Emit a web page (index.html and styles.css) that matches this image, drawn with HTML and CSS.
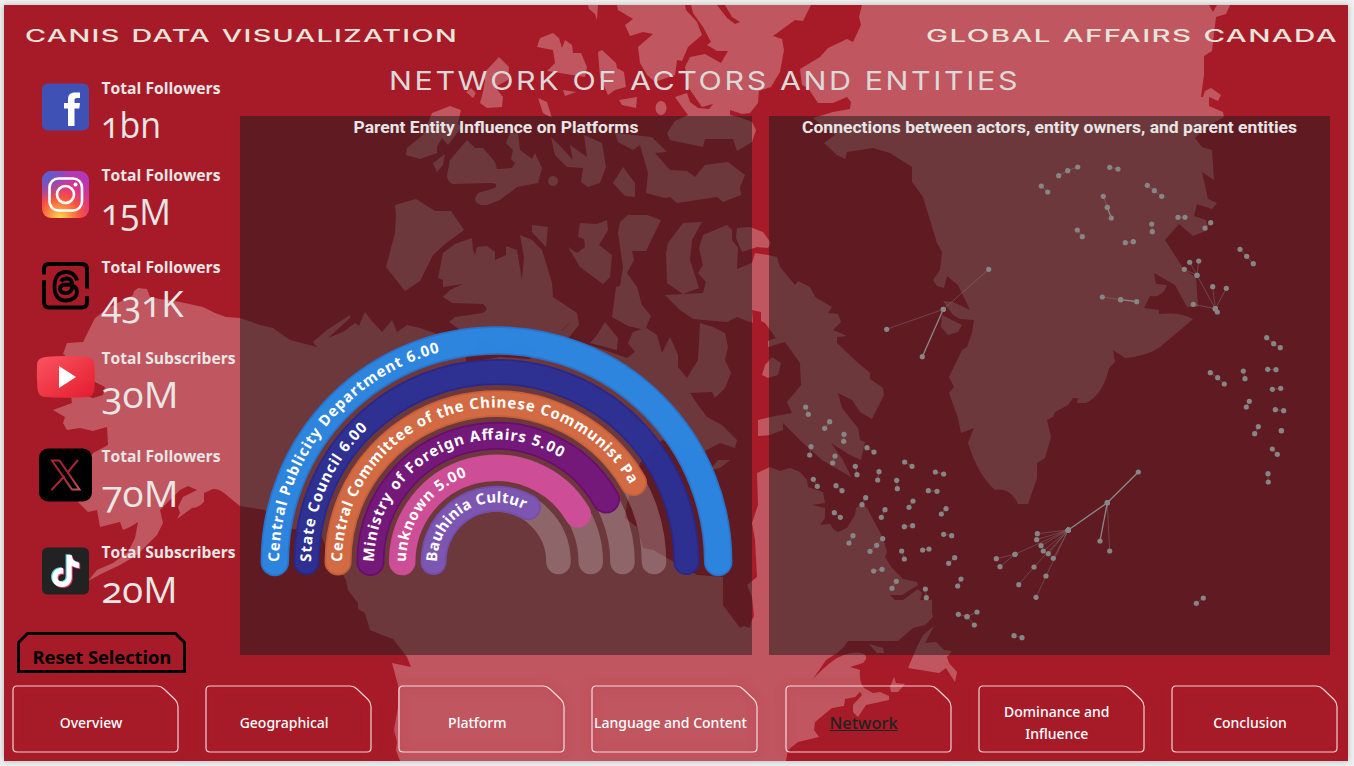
FILE: index.html
```html
<!DOCTYPE html>
<html lang="en">
<head>
<meta charset="utf-8">
<title>Network of Actors and Entities</title>
<link rel="stylesheet" href="styles.css">
</head>
<body>
<div class="report">
  <svg class="map" viewBox="4 5 1344 756" aria-hidden="true">
    <g class="land">
      <!-- mainland -->
      <path d="M133 295L134 291 138 288 147 289 150 297 160 299 180 302 203 307 215 313 226 317 240 318 260 325 273 328 290 340 317 347 313 342 327 330 350 315 350 318 328 338 343 332 355 323 359 326 365 312 371 320 382 332 392 320 397 332 407 325 420 328 440 335 463 330 560 330 562 331 572 320 579 323 575 315 579 325 565 342 590 345 610 352 627 358 635 352 628 343 633 332 645 328 642 325 657 335 662 353 670 337 678 355 678 367 687 378 698 360 700 323 713 327 725 333 728 347 725 360 731 373 725 388 715 398 712 392 690 393 698 405 707 417 722 425 737 440 735 448 720 443 703 452 662 440 640 463 627 503 625 518 637 527 643 548 653 550 667 558 697 575 723 577 723 605 740 628 744 626 750 628 751 622 754 616 752 597 747 585 757 577 755 540 752 523 758 505 757 473 770 467 780 471 790 468 800 472 807 480 808 487 823 492 825 503 812 505 825 508 825 518 820 525 830 524 834 530 838 532 847 528 855 515 856 508 862 503 867 508 883 538 887 552 885 557 892 568 903 579 917 582 918 585 902 595 890 595 895 600 903 600 918 589 922 593 920 600 932 600 932 612 933 617 925 625 913 628 898 641 848 641 843 648 837 653 826 660 813 679Q826 665 837 658 852 651 862 653 870 657 863 663L850 667 860 670Q859 683 864 688L873 693 880 692 889 696 889 700 866 705 858 717 853 712 853 705 862 695 860 692 855 697 845 699 844 706 832 708 815 722 814 730 819 737 798 742 788 750 786 761H400L396 750 397 742 394 730 398 707 398 685 392 663 411 667 407 657 393 639 382 635 370 630 365 613 358 609 358 603 348 590 346 580 342 573 337 565 325 545 320 532 293 529 265 510 240 506 230 498Q220 488 213 489L204 493 204 502Q198 508 192 508L177 519 180 513 178 507 183 497 197 490 188 486 180 490 160 510 163 523 157 535 137 555 120 565 103 573 88 581 97 570 113 563 128 552 135 538 138 522 130 527 123 530 120 522 100 527 97 510 88 512 78 502 80 470 93 453 108 445 107 427 93 431 80 428 67 430 63 423 65 417 53 410 72 403 70 390 93 398 103 395 105 387 95 382 65 370 65 355 63 354 67 343 83 342 95 318 110 307Z"/>
      <!-- Victoria and Banks islands -->
      <path d="M472 238L473 250 475 255 477 247 487 246 495 252V260L506 255V246L517 250 522 280 524 257 520 235 532 240 542 250 552 283 553 297 577 313 579 325 570 322 560 332H463L449 322 455 317 483 313Q490 309 483 304L452 303 443 297 450 290 463 284 443 287V280L438 278 443 253 455 244Z"/>
      <path d="M395 205L416 199 435 211H451L464 230 445 244 433 255 420 281 405 291 386 267 395 233 396 215Z"/>
      <!-- Arctic islands -->
      <path d="M588 5L589 9 595 14 597 20 598 5ZM617 5L618 10 633 19 625 25 630 36 643 32 653 34 638 47 640 63 647 75 655 82 675 75 677 60 682 61 688 47 702 35 697 22 686 10 685 5ZM691 5L693 13 703 27 711 42 707 45 717 51H728L721 63 705 54 690 57 685 67 688 87 702 107 713 104 709 109 698 108 690 102 687 93 675 97 682 107 688 115 675 121 667 133 670 140 703 147 705 139H733L737 151 752 142 756 130 752 122 742 118 730 115V110L742 114 750 113 758 103 759 91 771 87 780 72 784 50 782 39 773 36 795 20 803 21 811 5H725L732 17 740 22 735 24 727 18 717 5Z"/>
      <path d="M537 47L540 38 553 33 559 38 562 48 565 40 572 45 573 53H581L587 67 585 77 547 71 555 63 553 50ZM563 90L576 92 565 96ZM598 52L602 50 616 63 617 68 624 72 626 87 615 90 608 95 600 77ZM499 57L509 67 508 80 495 87 503 97 502 107 487 108 480 103 483 92 485 80 482 75ZM466 92L471 88 476 93 473 98ZM538 98L547 102 552 118 543 113ZM619 100L637 97 636 108 622 105ZM432 113L450 106 461 110 458 123 461 128 448 145 442 138 437 147V153L420 159 406 155 407 148 423 135ZM445 154L443 165 437 172 433 163Z"/>
      <ellipse cx="661" cy="108" rx="5.5" ry="7"/><circle cx="553" cy="181" r="5"/>
      <path d="M467 140L475 148H483L495 162 497 169 512 168 515 163 511 159 513 150 506 143 510 133H518L520 150 532 159 535 153 542 168 538 183 517 187 500 200 487 205Q475 206 475 198L478 193 495 188Q499 183 490 183L453 184Q447 182 447 175L450 160ZM551 137L562 148 573 160 570 145 587 157 584 135 602 143 606 167 600 183 588 187 581 182 583 168 567 167 555 155ZM623 167L635 183V197L625 196 613 183ZM615 133L652 137 667 152 655 153 670 170 687 171 695 177 705 165 728 162 745 175 740 187 741 195 723 202 717 197 677 203 670 197 665 198 646 193 648 173 640 145 633 150 618 142Z"/>
      <path d="M532 225L548 227 546 247 532 232ZM580 223L597 224 607 220 608 230 599 245 612 255 610 277 603 284 580 267 568 247 577 253 585 247 584 239 578 237ZM628 215H647L661 220 646 251H632L634 260 627 273 637 287 642 305 651 316 645 330 628 326 612 317 616 287 620 286 623 267 618 233 620 222ZM683 223L702 222 692 240 690 260 699 288 683 294 667 283 666 253 668 243ZM605 322L618 338 617 350 590 343 597 335ZM737 228L750 227 763 232 771 243 768 248 757 247 742 252 736 238ZM772 357L781 363 778 375 768 378 762 375 765 365ZM730 460L720 468 710 470 718 460Z"/>
      <!-- Baffin Island -->
      <path d="M727 225L732 230V240L738 248 737 269 752 263 755 253 768 255 777 257 780 267 795 285 798 281 810 287 815 297 832 307 828 313 838 314 841 322 833 330 847 336 837 337V343L857 362 870 373V379L883 388 884 395 872 419 860 412 852 400 838 393 842 408 858 428 860 440 865 442 861 460 850 455 831 443 843 460 851 477 822 460 803 443 783 423V430L770 435 758 436V420L770 417 792 413 787 402 801 385 800 363 785 342 768 347V341L776 338 765 323 761 321V312L752 310 753 323 747 318 752 323 737 317 727 322 693 319 680 310 665 295 703 293 706 282 698 273 703 265 699 248 703 235Z"/>
      <!-- Greenland -->
      <path d="M862 5L859 17 861 25 853 42 847 39 828 48 820 57 800 69 802 85 808 88 818 103H833L847 97 851 102 850 109 833 112 813 118 835 135 824 143 837 155 845 159 847 152 873 148 890 153 912 167V182L923 197 937 243 942 252 940 270 933 280 937 286 944 288 947 276 958 285 970 310 953 302 943 301 953 315 960 319 974 320 972 333 967 347 962 350 949 377 954 387 949 393 958 418 961 433 974 428 968 443Q978 475 995 490 1010 487 1018 504H1028L1037 478V463L1045 458 1051 437 1047 420 1053 417 1055 412 1068 405 1073 398H1078L1077 403H1086Q1103 395 1109 368L1115 362 1113 350 1125 358Q1148 356 1160 347L1193 319Q1180 312 1159 314V310L1144 308 1150 296Q1163 298 1167 285L1156 284 1154 273 1175 285 1187 307H1198L1196 278 1183 268 1165 240 1179 224 1193 236 1208 230 1206 220 1194 216 1197 204 1212 209 1217 203 1208 199 1202 172 1214 180 1212 150 1202 147 1195 138 1205 128 1224 117 1223 112 1209 106V97L1218 101 1221 95 1211 88 1205 91 1203 97H1201L1204 75V56L1212 51 1216 17 1226 14 1230 5H1217L1213 12 1209 5ZM942 315L962 325 958 332 948 335 941 327Z"/>
      <!-- Newfoundland and the Maritimes -->
      <path d="M934 626L925 643 936 642 944 650 952 651 947 657 949 663 957 672 955 682 946 668 939 673 908 668 917 647 923 635ZM869 644L883 648 884 653 877 653ZM894 677L896 683 905 684 898 692 891 692 890 687Z"/>
    </g>
    <path class="sea" d="M474 334L478 345 466 356 466 363 500 357 530 359 540 348 520 343 500 348Z"/>
  </svg>

  <header class="top">
    <svg class="brand" width="436" height="22"><text x="0" y="17" textLength="433" lengthAdjust="spacingAndGlyphs">CANIS DATA VISUALIZATION</text></svg>
    <svg class="brand" width="413" height="22"><text x="1" y="17" textLength="412" lengthAdjust="spacingAndGlyphs">GLOBAL AFFAIRS CANADA</text></svg>
  </header>

  <div class="content">
    <aside class="side">
      <section class="stat">
        <svg class="icon" viewBox="0 0 60 60"><rect x="7" y="6.500" width="47" height="47" rx="6" fill="#3f51b5"/><path d="M33 49V31.500h-4V26h4v-3.500c0-5 2.500-7 7-7h5v5.500H42c-1.800 0-2.500.8-2.500 2.300V26H45l-.7 5.500h-4.800V49z" fill="#fff"/></svg>
        <svg class="figures" width="140" height="60"><text class="label" x="1.500" y="17" textLength="119" lengthAdjust="spacingAndGlyphs">Total Followers</text><text class="value" x="1" y="61" textLength="60" lengthAdjust="spacingAndGlyphs">1bn</text></svg>
      </section>
      <section class="stat">
        <svg class="icon" viewBox="0 0 60 60"><defs><radialGradient id="ig" cx=".38" cy="1" r="1"><stop offset="0" stop-color="#ffd94e"/><stop offset=".25" stop-color="#fb8a44"/><stop offset=".45" stop-color="#f9503f"/><stop offset=".7" stop-color="#d9368a"/><stop offset="1" stop-color="#b037b8"/></radialGradient><radialGradient id="ib" cx="0" cy="0" r=".65"><stop offset="0" stop-color="#4168d8"/><stop offset="1" stop-color="#4168d8" stop-opacity="0"/></radialGradient></defs><rect x="7" y="7" width="47" height="47" rx="9" fill="url(#ig)"/><rect x="7" y="7" width="47" height="47" rx="9" fill="url(#ib)"/><g fill="none" stroke="#fff" stroke-width="2.600"><rect x="14.500" y="14.500" width="32.500" height="32" rx="9"/><circle cx="30.500" cy="30.500" r="8.500"/></g><circle cx="40.500" cy="20.500" r="2" fill="#fff"/></svg>
        <svg class="figures" width="140" height="60"><text class="label" x="1.500" y="17" textLength="119" lengthAdjust="spacingAndGlyphs">Total Followers</text><text class="value" x="1" y="61" textLength="70" lengthAdjust="spacingAndGlyphs">15M</text></svg>
      </section>
      <section class="stat">
        <svg class="icon" viewBox="0 0 60 60" fill="none" stroke="#000" stroke-linecap="butt"><path d="M9 18.500V13q0-5 5-5H46.500q5.500 0 5.500 5V32.500M52 40V46q0 5.500-5.500 5.500H14q-5 0-5-5.500V24" stroke-width="4"/><path d="M42 24.500C40 17.500 35 16 31 16c-7.500 0-11.500 5.500-11.500 14.500S23.500 44.500 31 44.500c6 0 11-3.500 11-8.500 0-5.500-5-7.500-10.500-7.500-4 0-6.500 1.700-6.500 4.500 0 5.500 11 6 12-1C38 25 35.500 22.500 31.500 22.500c-2.500 0-4.200 1-5.500 3" stroke-width="3.800"/></svg>
        <svg class="figures" width="140" height="60"><text class="label" x="1.500" y="16.500" textLength="119" lengthAdjust="spacingAndGlyphs">Total Followers</text><text class="value" x="1.500" y="60.500" textLength="82" lengthAdjust="spacingAndGlyphs">431K</text></svg>
      </section>
      <section class="stat">
        <svg class="icon" viewBox="0 0 60 60"><defs><linearGradient id="yt" x1="0" y1="0" x2="1" y2="1"><stop offset="0" stop-color="#fb5460"/><stop offset="1" stop-color="#e31c2e"/></linearGradient></defs><path d="M2 18q0-7 8-8Q31 8 52 10q7 1 7.500 8 .8 12 0 24-.5 7-7.500 8Q31 51.500 10 50q-7-1-7.500-8Q1.500 30 2 18z" fill="url(#yt)"/><path d="M24 19v22l17-11z" fill="#fff"/></svg>
        <svg class="figures" width="140" height="60"><text class="label" x="1.500" y="17" textLength="134" lengthAdjust="spacingAndGlyphs">Total Subscribers</text><text class="value" x="1.500" y="61" textLength="77" lengthAdjust="spacingAndGlyphs">30M</text></svg>
      </section>
      <section class="stat">
        <svg class="icon" viewBox="0 0 60 60"><defs><linearGradient id="xg" x1="0" x2="1" y2="1"><stop offset=".5" stop-color="#a82530"/><stop offset="1" stop-color="#c0565f"/></linearGradient></defs><rect x="4" y="3.500" width="53" height="53" rx="9"/><path d="M17 15.500h7.500L44.500 44.500H37zM43 15L32.500 27.500M29.500 31L16.500 45" fill="none" stroke="url(#xg)" stroke-width="2"/></svg>
        <svg class="figures" width="140" height="60"><text class="label" x="1.500" y="16.500" textLength="119" lengthAdjust="spacingAndGlyphs">Total Followers</text><text class="value" x="1.500" y="61.500" textLength="77" lengthAdjust="spacingAndGlyphs">70M</text></svg>
      </section>
      <section class="stat">
        <svg class="icon" viewBox="0 0 60 60"><defs><path id="note" d="M31.500 14h5c.3 4.500 3 7 7.500 7.500V27c-3 0-5.500-1-7.500-2.200V36c0 6-4 10-9.700 10-5.800 0-9.800-4-9.800-9.500 0-6 5-10.200 11-9.300v5.500c-3-.8-5.700 1-5.700 3.800 0 2.500 2 4.200 4.400 4.200 3 0 4.800-1.800 4.800-5z"/></defs><rect x="7" y="6.500" width="47" height="47" rx="5.500" fill="#222"/><use href="#note" x="-.9" y="-.8" fill="#62cdea"/><use href="#note" x="1.200" y=".9" fill="#ee3d70"/><use href="#note" x=".2" fill="#fff"/></svg>
        <svg class="figures" width="140" height="60"><text class="label" x="1.500" y="16.500" textLength="134" lengthAdjust="spacingAndGlyphs">Total Subscribers</text><text class="value" x="1.500" y="61.500" textLength="76" lengthAdjust="spacingAndGlyphs">20M</text></svg>
      </section>
      <button class="reset"><svg width="169" height="41"><path d="M10.500 1.500H158.500L167.500 10.500V39.500H1.500V10.500z" fill="none" stroke="#000" stroke-width="3"/><text x="15.500" y="31.500" textLength="139">Reset Selection</text></svg></button>
    </aside>

    <main class="main">
      <svg class="headline" width="640" height="64"><text x="-1" y="38" textLength="631" lengthAdjust="spacingAndGlyphs">NETWORK OF ACTORS AND ENTITIES</text></svg>
      <div class="panels">
        <section class="panel">
          <svg viewBox="239.500 116 512.500 539">
            <text class="panel-title" x="353" y="133" textLength="285" lengthAdjust="spacingAndGlyphs">Parent Entity Influence on Platforms</text>
            <g class="track">
              <path d="M337.500 562a158 158 0 0 1 316 0"/><path d="M370 562a126 126 0 0 1 252 0"/><path d="M401.700 562a94.300 94.300 0 0 1 188.600 0"/><path d="M433 562a62.500 62.500 0 0 1 125 0"/>
            </g>
            <g class="bars">
              <path stroke="#2776d0" stroke-width="28.500" d="M274.300 562a221.700 221.700 0 0 1 443.400 0"/><path stroke="#2d87e2" stroke-width="25" d="M274.300 562a221.700 221.700 0 0 1 443.400 0"/>
              <path stroke="#28288c" stroke-width="26" d="M306 562a190 190 0 0 1 380 0"/><path stroke="#2d3094" stroke-width="22.500" d="M306 562a190 190 0 0 1 380 0"/>
              <path stroke="#c8613a" stroke-width="27" d="M337.500 562A158.500 158.500 0 0 1 633 482.500"/><path stroke="#d46c43" stroke-width="23.500" d="M337.500 562A158.500 158.500 0 0 1 633 482.500"/>
              <path stroke="#6a0c70" stroke-width="28" d="M370 562A126 126 0 0 1 605.500 499.500"/><path stroke="#74187a" stroke-width="24.500" d="M370 562A126 126 0 0 1 605.500 499.500"/>
              <path stroke="#cf4d98" stroke-width="26.500" d="M401.700 562A94.300 94.300 0 0 1 577.300 514.300"/>
              <path stroke="#754dae" stroke-width="26" d="M433 562A63 63 0 0 1 527.500 507.300"/><path stroke="#7c56b2" stroke-width="22.500" d="M433 562A63 63 0 0 1 527.500 507.300"/>
            </g>
            <defs>
              <path id="t1" d="M278.500 562a217.500 217.500 0 0 1 435 0"/><path id="t2" d="M310.500 562a185.500 185.500 0 0 1 371 0"/><path id="t3" d="M341.500 562a154.500 154.500 0 0 1 309 0"/><path id="t4" d="M373.500 562a122.500 122.500 0 0 1 245 0"/><path id="t5" d="M405.500 562a90.500 90.500 0 0 1 181 0"/><path id="t6" d="M436.500 562a59.500 59.500 0 0 1 119 0"/>
            </defs>
            <g class="bar-label">
              <text textLength="284"><textPath href="#t1">Central Publicity Department 6.00</textPath></text>
              <text textLength="149"><textPath href="#t2">State Council 6.00</textPath></text>
              <text textLength="404"><textPath href="#t3">Central Committee of the Chinese Communist Pa</textPath></text>
              <text textLength="260"><textPath href="#t4">Ministry of Foreign Affairs 5.00</textPath></text>
              <text textLength="112"><textPath href="#t5">unknown 5.00</textPath></text>
              <text textLength="122"><textPath href="#t6">Bauhinia Cultur</textPath></text>
            </g>
          </svg>
        </section>
        <section class="panel">
          <svg viewBox="769 116 561 539">
            <defs>
              <marker id="dot" markerUnits="userSpaceOnUse" markerWidth="6" markerHeight="6" refX="3" refY="3"><circle class="node" cx="3" cy="3" r="2.600"/></marker>
              <marker id="dot3" markerUnits="userSpaceOnUse" markerWidth="18" markerHeight="18" refX="9" refY="9"><circle class="node" cx="9" cy="9" r="7.800"/></marker>
            </defs>
            <text class="panel-title" x="802" y="133" textLength="495" lengthAdjust="spacingAndGlyphs">Connections between actors, entity owners, and parent entities</text>
            <g class="links strong">
              <path stroke-width="1.600" d="M1138.300 472L1107.300 502.700 1068.300 530"/><path d="M1107.300 502.700L1100 541"/><path d="M943.300 309.300L922.300 356.700"/><path d="M1107.300 207.300L1111.300 218"/><path d="M1120.700 299.700L1136.700 301.700"/>
            </g>
            <g class="links">
              <path d="M1107.300 502.700L1109.700 551"/>
              <path d="M988.700 269.300L943.300 309.300 886.700 329.300"/>
              <path d="M1041.300 186L1047.700 192"/><path d="M1058.700 175.700L1067.700 170.700 1077.700 167"/><path d="M1109.700 167.300L1118 169"/><path d="M1147.300 185.300L1154.300 190.700 1161.700 196.300"/><path d="M1103.300 196.300L1107.300 207.300"/><path d="M1077.300 230L1082.300 236.700"/><path d="M1125.300 242.700L1133.300 241.700"/><path d="M1151.700 224L1152.300 231.700"/><path d="M1178 217.300H1185"/><path d="M1205 228L1210.700 222.700"/><path d="M1240 249.300L1246.700 256.300 1253.300 263.700"/>
              <path d="M1189.700 262.300L1197 275.300 1198.700 261"/><path d="M1184.300 269.300L1197 275.300 1215.300 308.700 1212.700 286.700"/><path d="M1226.300 288.300L1215.300 308.700 1193.300 304.300"/><path d="M1215.300 308.700L1217.300 312"/><path d="M1102.300 297L1120.700 299.700"/>
              <path d="M1266.700 337.700L1273.700 343.700 1280.300 347.700"/><path d="M1210.300 372.700L1217.700 377.700 1224.300 384"/><path d="M1243.300 371L1245 378.700"/><path d="M1267.700 369.300L1276 369.700"/><path d="M1272.300 389.300L1280.700 388.300"/><path d="M1249.300 401.300L1246.300 407"/><path d="M1275.300 409.700L1283.700 410.700"/><path d="M1281.300 430.700h.1"/><path d="M1258.300 426.700L1254.700 433.700"/><path d="M1272.300 449L1277.300 454.300"/><path d="M1268 473.700L1268.300 482"/><path d="M1196.300 603.300L1203.300 598"/>
              <path d="M1068.300 530L1037.300 533.700"/><path d="M1068.300 530L1036.700 539.700"/><path d="M1068.300 530L1041 545.700"/><path d="M1068.300 530L1043.300 551"/><path d="M1068.300 530L1048.300 553.700"/><path d="M1068.300 530L1053.300 558.300"/><path d="M1068.300 530L1034 567 1018.700 584.700"/><path d="M1068.300 530L1046 576 1036 597.300"/><path d="M1068.300 530L1015 554.300 996.300 558.700"/><path d="M1015 554.300L1000 566.700"/>
            </g>
            <g class="links cluster" transform="translate(770 380) scale(.33333)">
              <path d="M107 81L115 103"/><path d="M179 125L164 145"/><path d="M222 163L221 184"/><path d="M123 200L119 225"/><path d="M195 228L188 249"/><path d="M291 203L312 216"/><path d="M256 259L261 284"/><path d="M327 275L323 300"/><path d="M130 298L142 319"/><path d="M198 317L216 332"/><path d="M404 246L426 259"/><path d="M380 301L382 326"/><path d="M496 276L521 282"/><path d="M475 332L501 334"/><path d="M287 353L276 374"/><path d="M193 398L211 412"/><path d="M345 389L334 412"/><path d="M429 363L417 382"/><path d="M528 386L514 402"/><path d="M403 440L428 437"/><path d="M249 467L237 489"/><path d="M338 476L320 496 300 514"/><path d="M521 463L545 467"/><path d="M395 513L403 537"/><path d="M458 510L477 507"/><path d="M554 533L536 550"/><path d="M311 573L336 568"/><path d="M379 604L366 625"/><path d="M573 597L563 618"/><path d="M466 627L469 653"/><path d="M565 703L591 710 621 696"/><path d="M591 710L613 735"/><path d="M732 767L756 773"/>
            </g>
          </svg>
        </section>
      </div>
    </main>
  </div>

  <svg class="defs"><symbol id="tab" viewBox="0 0 167 69"><path d="M5 1H145Q149 1 152 4L163 14.500Q166 17.500 166 21.500V63Q166 67 162 67H5Q1 67 1 63V5Q1 1 5 1Z"/></symbol></svg>
  <nav class="tabs">
    <a class="tab"><svg><use href="#tab"/></svg><span>Overview</span></a>
    <a class="tab"><svg><use href="#tab"/></svg><span>Geographical</span></a>
    <a class="tab"><svg><use href="#tab"/></svg><span>Platform</span></a>
    <a class="tab"><svg><use href="#tab"/></svg><span>Language and Content</span></a>
    <a class="tab current"><svg><use href="#tab"/></svg><span>Network</span></a>
    <a class="tab"><svg><use href="#tab"/></svg><span>Dominance and<br>Influence</span></a>
    <a class="tab"><svg><use href="#tab"/></svg><span>Conclusion</span></a>
  </nav>
</div>
</body>
</html>
```
FILE: styles.css
```css
* { box-sizing: border-box; }
body {
  margin: 0;
  width: 1354px;
  height: 766px;
  padding: 5px 6px 5px 4px;
  background: #f0f0f0;
  font-family: "Open Sans", "Noto Sans", sans-serif;
  overflow: hidden;
}
svg { display: block; overflow: visible; }
.report {
  position: relative;
  width: 1344px;
  height: 756px;
  background: #a71b28;
  box-shadow: 0 0 6px rgba(0, 0, 0, .25);
}
.map { position: absolute; inset: 0; width: 1344px; height: 756px; overflow: hidden; }
.land { fill: #c0565f; }
.sea { fill: #a71b28; }
.top, .content, .tabs { position: relative; }

.top {
  display: flex;
  justify-content: space-between;
  height: 47px;
  padding: 20px 10px 0 21px;
}
.brand text { font: 500 17px Inter, sans-serif; letter-spacing: .8px; word-spacing: 1px; fill: #e8e4dc; }

.content { display: grid; grid-template-columns: 235.5px 1fr; height: 633px; }
.side { padding: 25px 0 0 31px; }
.stat { display: flex; height: 60px; margin-bottom: 27px; }
.stat:nth-child(2) { margin-bottom: 32px; }
.stat:nth-child(3) { margin-bottom: 31px; }
.stat:nth-child(4) { margin-bottom: 37.5px; }
.stat:nth-child(5) { margin-bottom: 36px; }
.stat:nth-child(6) { margin-bottom: 31.5px; }
.icon { width: 60px; height: 60px; margin-right: 5px; }
.label { font: 700 15.500px "Open Sans", sans-serif; fill: #e9e6e6; }
.value {
  font: 400 37px "Open Sans", sans-serif;
  font-variant-numeric: oldstyle-nums;
  fill: #e9e6e6;
}
.reset { display: block; margin-left: -18px; padding: 0; border: 0; background: none; }
.reset text { font: 700 18.500px "Open Sans", sans-serif; }

.headline { margin-left: 150px; }
.headline text { font: 400 26px Inter, sans-serif; letter-spacing: 2.2px; fill: #ddd8d8; }
.panels { display: grid; grid-template-columns: 512.5px 561px; column-gap: 17px; height: 539px; }
.panel { background: rgba(25, 25, 26, .5); }
.panel-title { font: 700 16.500px Roboto, sans-serif; fill: #e6e6e6; }
.track path { fill: none; stroke: rgba(255, 255, 255, .23); stroke-width: 24.5; stroke-linecap: round; }
.bars path { fill: none; stroke-linecap: round; }
.bars { opacity: .98; }
.bar-label { font: 700 15px "Noto Sans", sans-serif; fill: #fff; }

.links path {
  fill: none;
  stroke: #8a8a8a;
  stroke-opacity: .38;
  stroke-width: 1;
  marker-start: url(#dot);
  marker-mid: url(#dot);
  marker-end: url(#dot);
}
.strong path { stroke-opacity: 1; stroke-width: 1.300; }
.cluster path { stroke-width: 3; marker-start: url(#dot3); marker-mid: url(#dot3); marker-end: url(#dot3); }
.node { fill: #868686; }

.defs { position: absolute; width: 0; height: 0; }
.tabs { display: flex; justify-content: space-between; padding: 0 10px 0 8px; }
.tab { display: grid; width: 167px; height: 69px; place-items: center; }
.tab > * { grid-area: 1 / 1; }
.tab svg {
  width: 167px;
  height: 69px;
  fill: none;
  stroke: rgba(255, 255, 255, .8);
  stroke-width: 1.2;
  filter: drop-shadow(0 0 5px rgba(200, 20, 40, .8));
}
.tab span {
  padding: 7px 9px 0 0;
  color: #fff;
  font: 500 14px/22px "Noto Sans", sans-serif;
  text-align: center;
  white-space: nowrap;
}
.current span { color: #222; font: 500 16.500px/22px "Noto Sans", sans-serif; text-decoration: underline; }
```
